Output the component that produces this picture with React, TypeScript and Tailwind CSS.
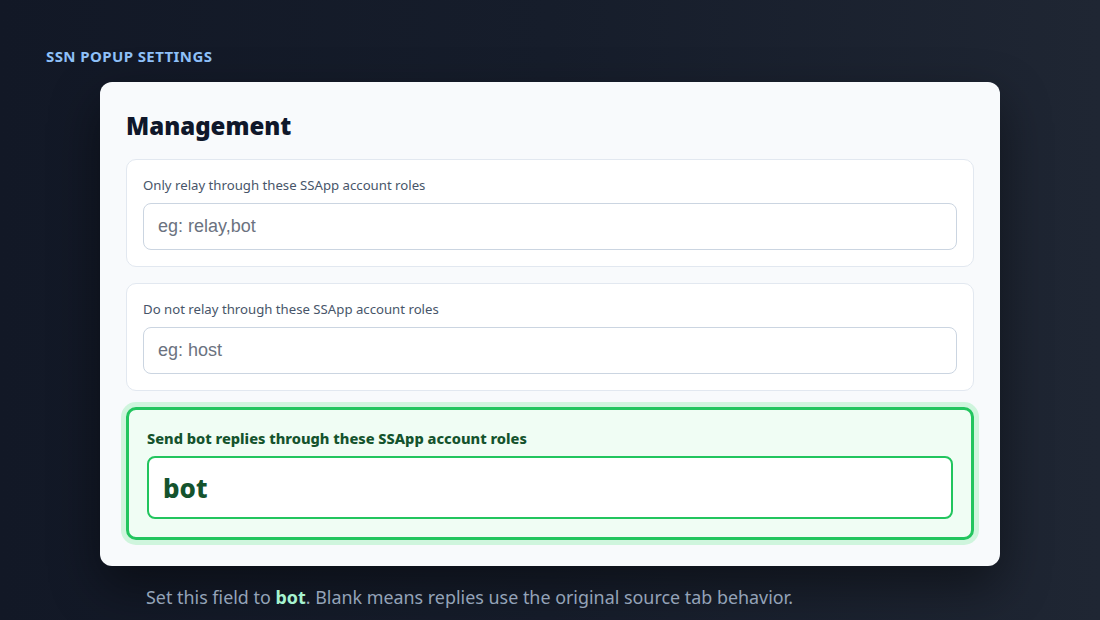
import React from "react";

const sans = "font-['Noto_Sans','Open_Sans',sans-serif]";

function Field({ label, placeholder }: { label: string; placeholder: string }) {
  return (
    <div className="rounded-[10px] border border-[#e2e8f0] bg-white p-4">
      <div className="mb-[9px] text-[13.2px] leading-[18px] text-[#475569]">{label}</div>
      <input
        readOnly
        placeholder={placeholder}
        className="block h-[47px] w-full rounded-lg border border-[#cbd5e1] bg-white px-[14px] font-['Liberation_Sans',Arial,sans-serif] text-[18px] text-[#111827] outline-none placeholder:text-[#6b7280]"
      />
    </div>
  );
}

export default function App() {
  return (
    <div
      className={`${sans} min-h-[620px] w-full bg-gradient-to-r from-[#121826] via-[#161d2b] to-[#1f2633] pl-[46px] pt-[47px]`}
    >
      <div className="text-[15px] font-bold leading-[18px] tracking-[0.4px] text-[#8ec0f8]">
        SSN POPUP SETTINGS
      </div>
      <div className="ml-[54px] mt-[17px] w-[900px] rounded-xl bg-[#f8fafc] px-[26px] pb-[26px] pt-[27px] shadow-[0_20px_50px_rgba(0,0,0,0.45)]">
        <h2 className="mb-[17px] text-[24px] font-black leading-[33px] text-[#0f172a]">Management</h2>
        <div className="flex flex-col gap-4">
          <Field label="Only relay through these SSApp account roles" placeholder="eg: relay,bot" />
          <Field label="Do not relay through these SSApp account roles" placeholder="eg: host" />
          <div className="rounded-[10px] border-[3px] border-[#22c55e] bg-[#f0fdf4] px-[18px] pb-[18px] pt-[18px] shadow-[0_0_0_5px_#cff5dd]">
            <div className="mb-[8px] text-[14.6px] font-extrabold leading-[20px] text-[#14532d]">
              Send bot replies through these SSApp account roles
            </div>
            <input
              readOnly
              value="bot"
              className="block h-[63px] w-full rounded-lg border-2 border-[#22c55e] bg-white px-[14px] text-[26px] font-extrabold text-[#14532d] outline-none"
            />
          </div>
        </div>
      </div>
      <p className="ml-[100px] mt-[19px] text-[17.9px] leading-[24px] text-[#94a3b8]">
        Set this field to <b className="font-bold text-[#a7f3d0]">bot</b>. Blank means replies use the original source tab behavior.
      </p>
    </div>
  );
}
